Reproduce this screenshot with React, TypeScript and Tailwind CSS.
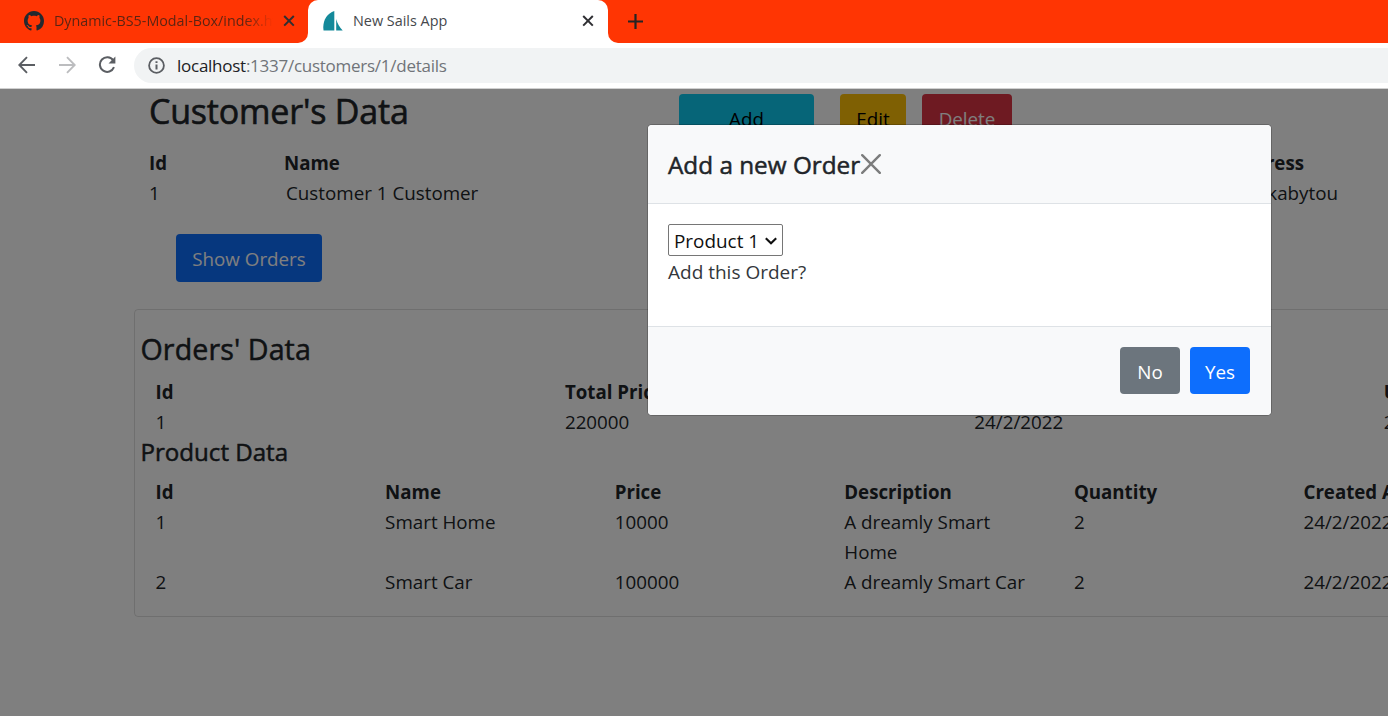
import React from "react";

const orderColumns = [
  { head: "Id", cell: "1" },
  { head: "Total Price", cell: "220000" },
  { head: "Created At", cell: "24/2/2022" },
  { head: "Updated At", cell: "24/2/2022" },
];

const productHeads = ["Id", "Name", "Price", "Description", "Quantity", "Created At"];
const products = [
  ["1", "Smart Home", "10000", "A dreamly Smart Home", "2", "24/2/2022"],
  ["2", "Smart Car", "100000", "A dreamly Smart Car", "2", "24/2/2022"],
];

function GithubIcon() {
  return (
    <svg className="h-5 w-5 shrink-0" viewBox="0 0 16 16" fill="#24292f">
      <path d="M8 0C3.58 0 0 3.58 0 8c0 3.54 2.29 6.53 5.47 7.59.4.07.55-.17.55-.38 0-.19-.01-.82-.01-1.49-2.01.37-2.53-.49-2.69-.94-.09-.23-.48-.94-.82-1.13-.28-.15-.68-.52-.01-.53.63-.01 1.08.58 1.23.82.72 1.21 1.87.87 2.33.66.07-.52.28-.87.51-1.07-1.78-.2-3.64-.89-3.64-3.95 0-.87.31-1.59.82-2.15-.08-.2-.36-1.02.08-2.12 0 0 .67-.21 2.2.82.64-.18 1.32-.27 2-.27s1.36.09 2 .27c1.53-1.04 2.2-.82 2.2-.82.44 1.1.16 1.92.08 2.12.51.56.82 1.27.82 2.15 0 3.07-1.87 3.75-3.65 3.95.29.25.54.73.54 1.48 0 1.07-.01 1.93-.01 2.2 0 .21.15.46.55.38A8.01 8.01 0 0 0 16 8c0-4.42-3.58-8-8-8z" />
    </svg>
  );
}

function SailsIcon() {
  return (
    <svg className="h-5 w-5 shrink-0" viewBox="0 0 20 20" fill="#14899a">
      <path d="M11.3 0v19.5H.6C-1 11 3.500 2.500 11.3 0z" />
      <path d="M13.200 8c1 4.500 3.500 8.500 6.500 11.500h-6.500z" />
    </svg>
  );
}

function TabClose() {
  return (
    <svg className="h-3 w-3 shrink-0" viewBox="0 0 12 12" fill="none" stroke="#2f2f33" strokeWidth="2">
      <path d="M1.2 1l9.6 9.6M10.800 1l-9.600 9.6" />
    </svg>
  );
}

function TabStrip() {
  return (
    <div className="flex h-[43px] bg-[#ff3503]">
      <div className="w-[308px] bg-white">
        <div className="flex h-[43px] items-center rounded-br-[10px] bg-[#ff3503] pb-px pl-6">
          <GithubIcon />
          <div className="ml-[10px] w-[221px] overflow-hidden whitespace-nowrap bg-[linear-gradient(90deg,#5a2413_86%,transparent_99%)] bg-clip-text pb-px text-[14.3px] text-transparent">
            Dynamic-BS5-Modal-Box/index.html
          </div>
          <div className="ml-2">
            <TabClose />
          </div>
        </div>
      </div>
      <div className="flex h-[43px] w-[300px] items-center rounded-t-[10px] bg-white pb-px pl-[15px]">
        <SailsIcon />
        <div className="ml-[10px] w-[229px] whitespace-nowrap pb-px text-[14.4px] text-[#45484c]">New Sails App</div>
        <TabClose />
      </div>
      <div className="flex-1 bg-white">
        <div className="flex h-[43px] items-center rounded-bl-[10px] bg-[#ff3503] pl-5">
          <svg className="h-[15px] w-[15px]" viewBox="0 0 15 15" stroke="#242424" strokeWidth="2.2">
            <path d="M7.500 0v15M0 7.500h15" />
          </svg>
        </div>
      </div>
    </div>
  );
}

function Toolbar() {
  return (
    <div className="flex h-[46px] items-center border-b border-[#d0d0d0] bg-white pl-[18px]">
      <svg className="mb-px h-[18px] w-[18px]" viewBox="0 0 18 18" fill="none" stroke="#5b5e63" strokeWidth="1.9">
        <path d="M17 9H2M9 1.2L1.3 9 9 16.8" />
      </svg>
      <svg className="mb-px ml-[22px] h-[18px] w-[18px]" viewBox="0 0 18 18" fill="none" stroke="#bcbdbf" strokeWidth="1.9">
        <path d="M1 9h15M9 1.2L16.7 9 9 16.8" />
      </svg>
      <svg className="mb-px ml-[22px] h-[18px] w-[18px]" viewBox="0 0 18 18" fill="none">
        <path d="M15.200 4.400A7.300 7.300 0 1 0 16 11.200" stroke="#5b5e63" strokeWidth="2" />
        <path d="M17.400.6v6.900h-6.900z" fill="#5b5e63" />
      </svg>
      <div className="ml-[18px] flex h-[35px] flex-1 items-center rounded-l-full bg-[#f1f3f4] pl-[14px]">
        <svg className="h-[17px] w-[17px]" viewBox="0 0 17 17" fill="none">
          <circle cx="8.5" cy="8.5" r="7.4" stroke="#5b5e63" strokeWidth="1.8" />
          <path d="M8.500 7.600v5M8.500 4.200v1.900" stroke="#5b5e63" strokeWidth="2" />
        </svg>
        <div className="ml-3 whitespace-nowrap text-[17px] tracking-[-0.26px] text-[#707479]">
          <span className="text-[#202124]">localhost</span>:1337/customers/1/details
        </div>
      </div>
    </div>
  );
}

function CustomerSection() {
  return (
    <section className="h-[220px] w-[1400px] pl-[149px] pt-[5px]">
      <div className="flex">
        <h2 className="mt-[-4px] w-[530px] text-[34px] leading-[42px] tracking-[-0.2px] [-webkit-text-stroke:0.6px_#212529]">
          Customer's Data
        </h2>
        <button className="h-12 w-[135px] rounded bg-[#0dcaf0] pt-0.5 text-black">Add</button>
        <button className="ml-[26px] h-12 w-[66px] rounded bg-[#ffc107] pt-0.5 text-black">Edit</button>
        <button className="ml-4 h-12 w-[90px] rounded bg-[#dc3545] pt-0.5 text-white">Delete</button>
      </div>
      <div className="mt-[6px] flex leading-[30px]">
        <div className="w-[135px]">
          <div className="text-[18.7px] font-bold">Id</div>
          <div>1</div>
        </div>
        <div className="w-[919px]">
          <div className="text-[18.7px] font-bold">Name</div>
          <div className="pl-0.5">Customer 1 Customer</div>
        </div>
        <div className="w-[135px]">
          <div className="w-[101px] text-right text-[18.7px] font-bold">Address</div>
          <div className="w-[135px] text-right">kabytou</div>
        </div>
      </div>
      <button className="ml-[27px] mt-[26px] h-12 w-[146px] rounded bg-[#0d6efd] pt-0.5 text-white">Show Orders</button>
    </section>
  );
}

function OrdersCard() {
  return (
    <section className="ml-[134px] h-[308px] w-[1400px] rounded border border-black/[.125] pl-[5.5px] pt-[21px]">
      <h3 className="text-[28.6px] leading-[36px] tracking-[0.1px] [-webkit-text-stroke:0.5px_#212529]">Orders' Data</h3>
      <div className="mt-[10px] flex pl-[15px] leading-[30px]">
        {orderColumns.map((c) => (
          <div key={c.head} className="w-[409.4px] shrink-0">
            <div className="text-[18.7px] font-bold">{c.head}</div>
            <div>{c.cell}</div>
          </div>
        ))}
      </div>
      <h4 className="text-[24.1px] leading-[30px] [-webkit-text-stroke:0.5px_#212529]">Product Data</h4>
      <div className="mt-[10px] pl-[15px] leading-[30px]">
        <div className="flex text-[18.7px] font-bold">
          {productHeads.map((h) => (
            <div key={h} className="w-[229.6px] shrink-0">{h}</div>
          ))}
        </div>
        {products.map((row) => (
          <div key={row[0]} className="flex">
            {row.map((value, i) => (
              <div key={i} className="w-[229.6px] shrink-0 pr-[30px]">{value}</div>
            ))}
          </div>
        ))}
      </div>
    </section>
  );
}

function OrderModal() {
  return (
    <div className="absolute left-[647px] top-[35px] w-[625px] overflow-hidden rounded-[5px] border border-black/20 bg-white bg-clip-padding">
      <div className="flex h-[79px] items-center border-b border-[#dee2e6] bg-[#f8f9fa] pl-5">
        <h5 className="w-[193px] whitespace-nowrap pt-0.5 text-[24.3px] leading-[30px] [-webkit-text-stroke:0.5px_#212529]">
          Add a new Order
        </h5>
        <svg className="h-5 w-5" viewBox="0 0 20 20" fill="none" stroke="#7c7d7d" strokeWidth="2.4" strokeLinecap="round">
          <path d="M1.2 1.2l17.6 17.6M18.8 1.2L1.2 18.8" />
        </svg>
      </div>
      <div className="h-[122px] px-5 pt-5">
        <div className="relative w-[115px]">
          <select className="block h-8 w-[115px] appearance-none rounded-[2px] border border-[#767676] bg-white pl-[5px] pt-0.5 text-[18.9px] text-[#101010]">
            <option>Product 1</option>
          </select>
          <svg className="pointer-events-none absolute right-[6px] top-[13px] h-[8px] w-3" viewBox="0 0 12 8" fill="none" stroke="#101010" strokeWidth="2.1">
            <path d="M.8 1.2L6 6.300l5.200-5.100" />
          </svg>
        </div>
        <div className="pt-px text-[19px] leading-[30px] text-[#33373b]">Add this Order?</div>
      </div>
      <div className="flex h-[89px] justify-end gap-[10px] border-t border-[#dee2e6] bg-[#f8f9fa] pr-[21px] pt-5">
        <button className="h-[47px] w-[60px] rounded bg-[#6c757d] pt-1 text-white">No</button>
        <button className="h-[47px] w-[60px] rounded bg-[#0d6efd] pt-1 text-white">Yes</button>
      </div>
    </div>
  );
}

export default function App() {
  return (
    <div className="h-[716px] w-[1388px] overflow-hidden bg-white font-['Open_Sans','Noto_Sans',sans-serif]">
      <TabStrip />
      <Toolbar />
      <main className="relative h-[627px] overflow-hidden text-[18.8px] text-[#212529]">
        <CustomerSection />
        <OrdersCard />
        <div className="absolute inset-0 bg-black/50" />
        <OrderModal />
      </main>
    </div>
  );
}
